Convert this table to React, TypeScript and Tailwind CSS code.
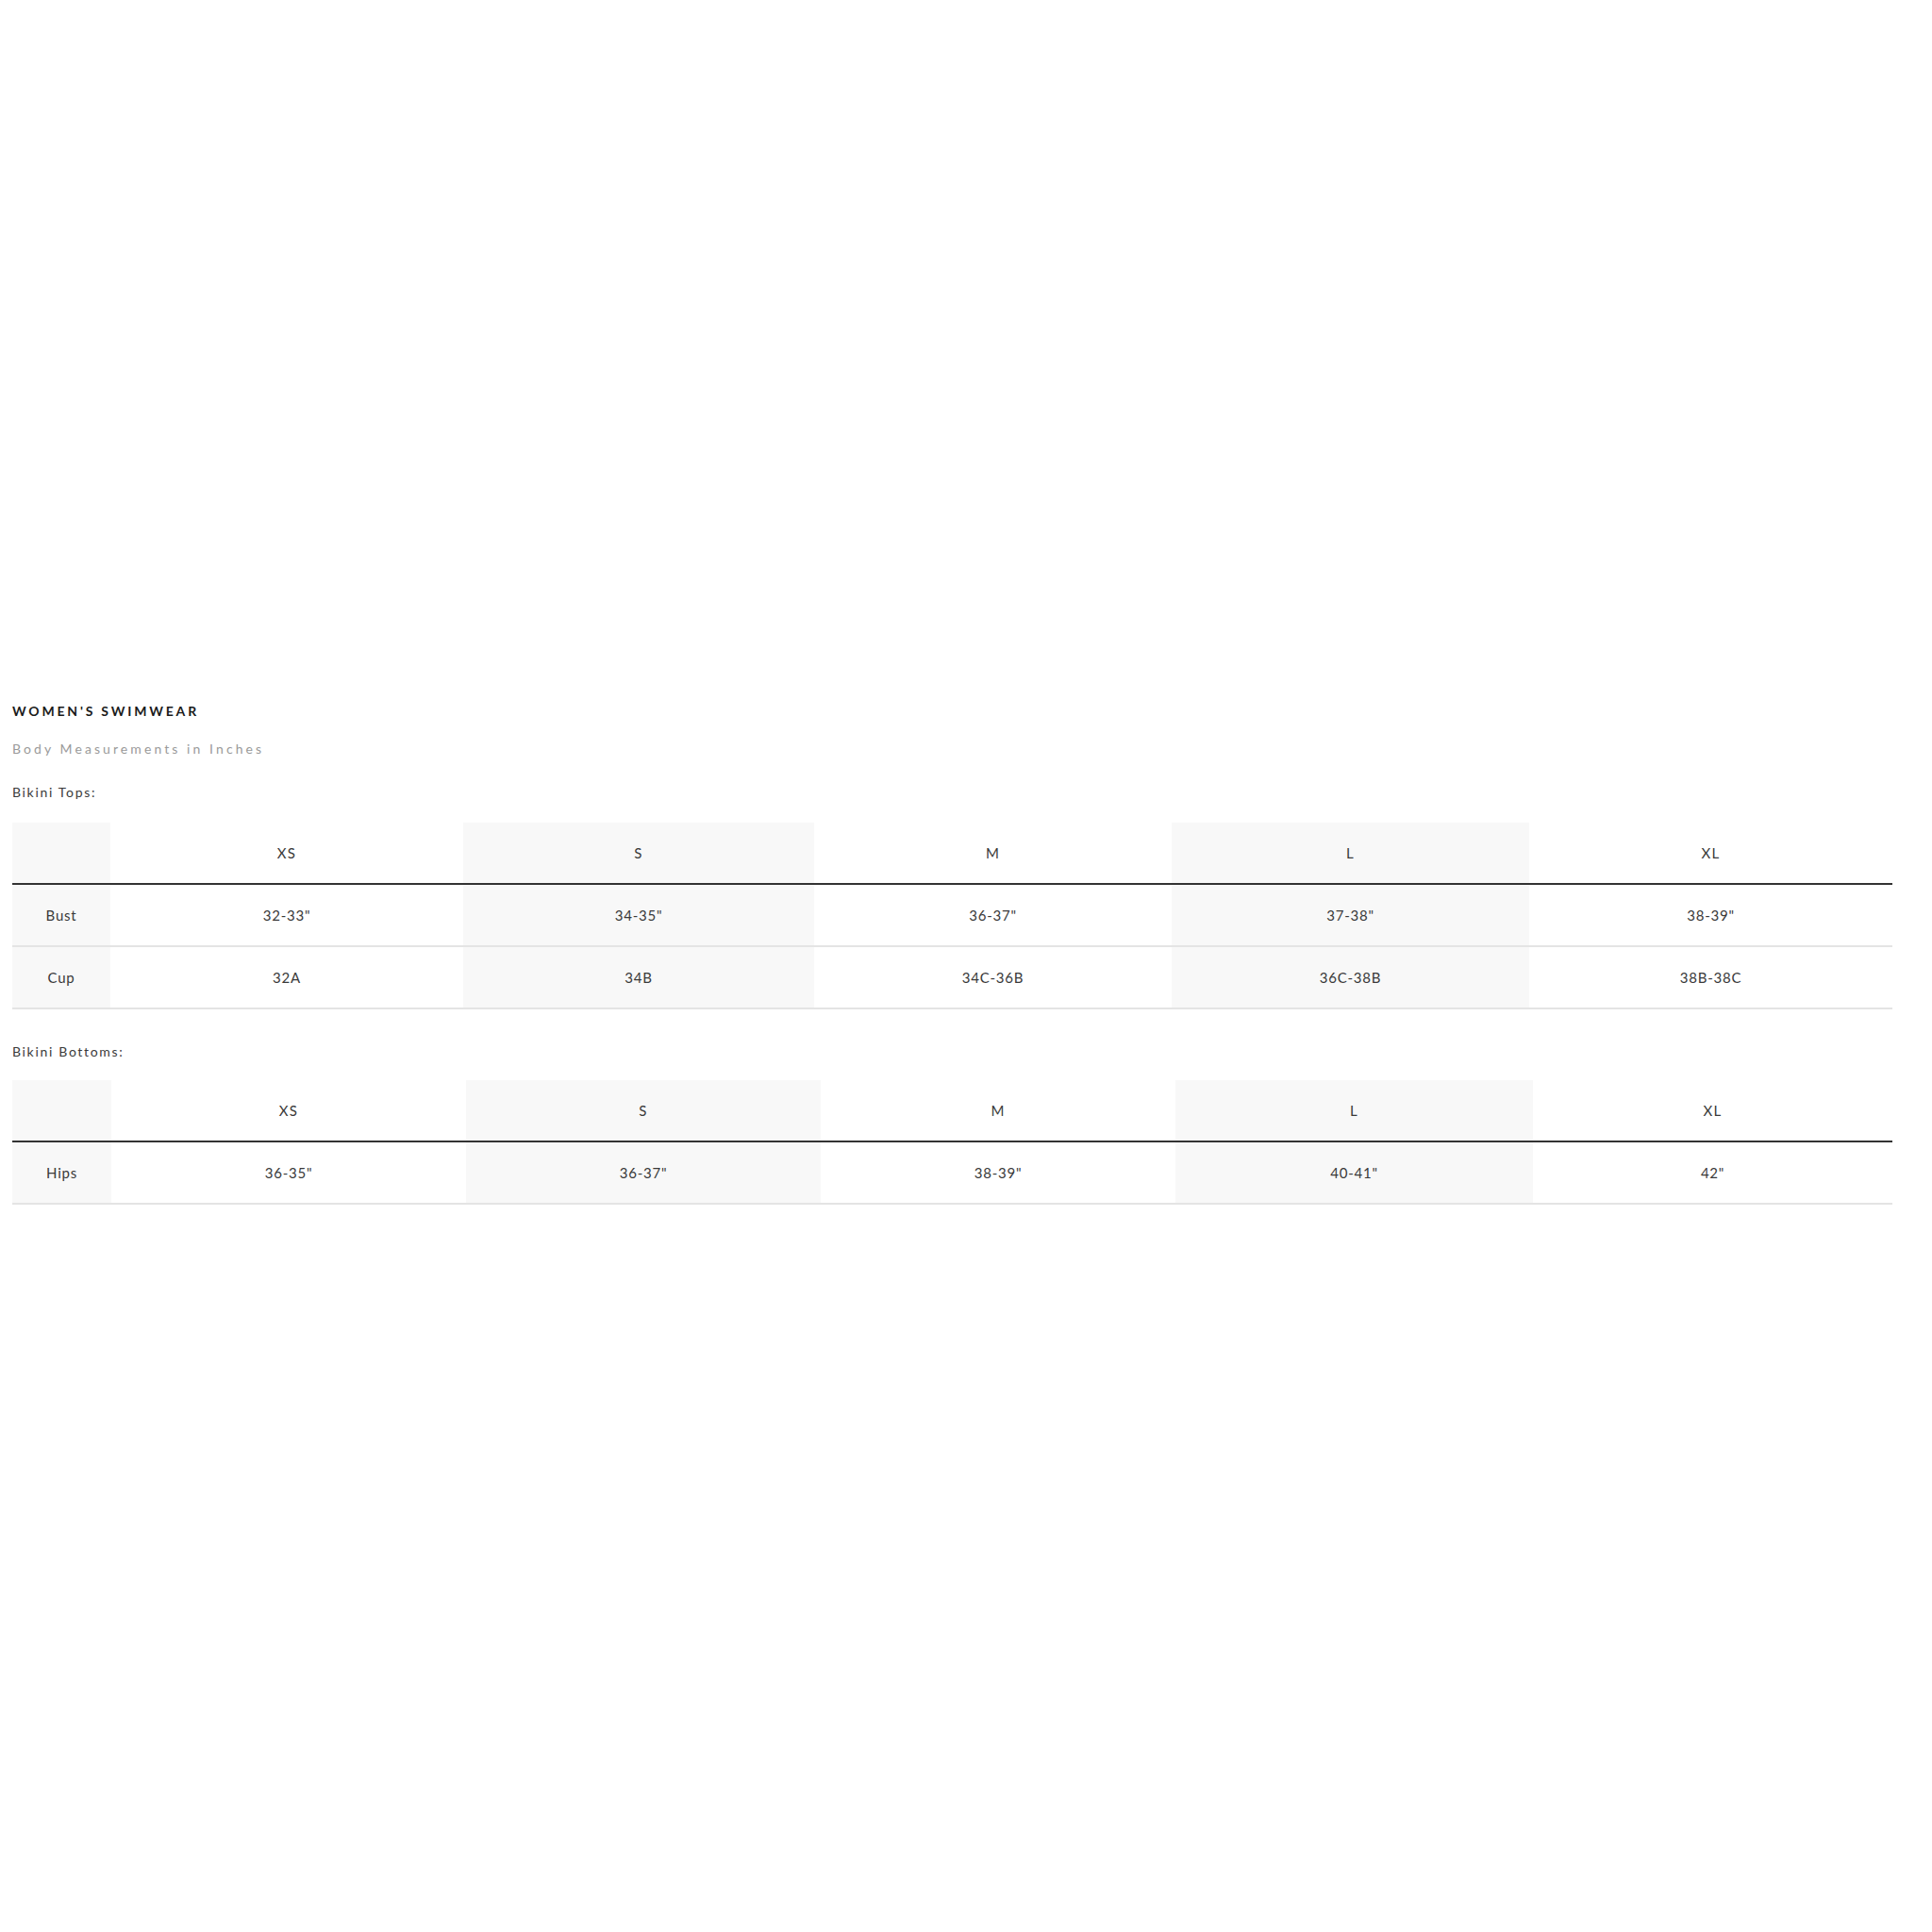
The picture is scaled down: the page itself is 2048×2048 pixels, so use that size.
import React from "react";

const font = { fontFamily: "Lato, 'Open Sans', sans-serif" };

type TableProps = {
  cols: string;
  headers: string[];
  rows: { label: string; values: string[] }[];
};

function SizeTable({ cols, headers, rows }: TableProps) {
  const shade = (i: number) => (i === 0 || i === 2 || i === 4 ? "bg-[#f8f8f8]" : "bg-white");
  return (
    <div className="w-[1993px]">
      <div className={`grid ${cols} border-b-2 border-[#333333]`}>
        {["", ...headers].map((h, i) => (
          <div
            key={i}
            className={`h-[64px] flex items-center justify-center text-[15px] font-normal tracking-[0.08em] text-[#3a3a3a] ${shade(i)}`}
          >
            {h}
          </div>
        ))}
      </div>
      {rows.map((r) => (
        <div key={r.label} className={`grid ${cols} border-b-2 border-[#e4e4e4]`}>
          {[r.label, ...r.values].map((v, i) => (
            <div
              key={i}
              className={`h-[64px] flex items-center justify-center text-[15px] font-normal tracking-[0.05em] text-[#3a3a3a] ${shade(i)}`}
            >
              {v}
            </div>
          ))}
        </div>
      ))}
    </div>
  );
}

export default function App() {
  const sizes = ["XS", "S", "M", "L", "XL"];
  return (
    <div className="w-[2048px] h-[2048px] bg-white" style={font}>
      <div className="pl-[13px] pt-[744px] flex flex-col">
        <div className="h-[20px] leading-[20px] text-[14px] font-bold tracking-[0.2em] text-[#1a1a1a]">
          WOMEN&apos;S SWIMWEAR
        </div>
        <div className="mt-[20px] h-[20px] leading-[20px] text-[14px] font-normal tracking-[0.22em] text-[#9a9a9a]">
          Body Measurements in Inches
        </div>
        <div className="mt-[26px] h-[20px] leading-[20px] text-[14px] font-normal tracking-[0.12em] text-[#3a3a3a]">
          Bikini Tops:
        </div>
        <div className="mt-[22px]">
          <SizeTable
            cols="grid-cols-[104px_374px_372px_379px_379px_385px]"
            headers={sizes}
            rows={[
              { label: "Bust", values: ["32-33\"", "34-35\"", "36-37\"", "37-38\"", "38-39\""] },
              { label: "Cup", values: ["32A", "34B", "34C-36B", "36C-38B", "38B-38C"] },
            ]}
          />
        </div>
        <div className="mt-[35px] h-[20px] leading-[20px] text-[14px] font-normal tracking-[0.12em] text-[#3a3a3a]">
          Bikini Bottoms:
        </div>
        <div className="mt-[20px]">
          <SizeTable
            cols="grid-cols-[105px_376px_376px_376px_379px_381px]"
            headers={sizes}
            rows={[{ label: "Hips", values: ["36-35\"", "36-37\"", "38-39\"", "40-41\"", "42\""] }]}
          />
        </div>
      </div>
    </div>
  );
}
